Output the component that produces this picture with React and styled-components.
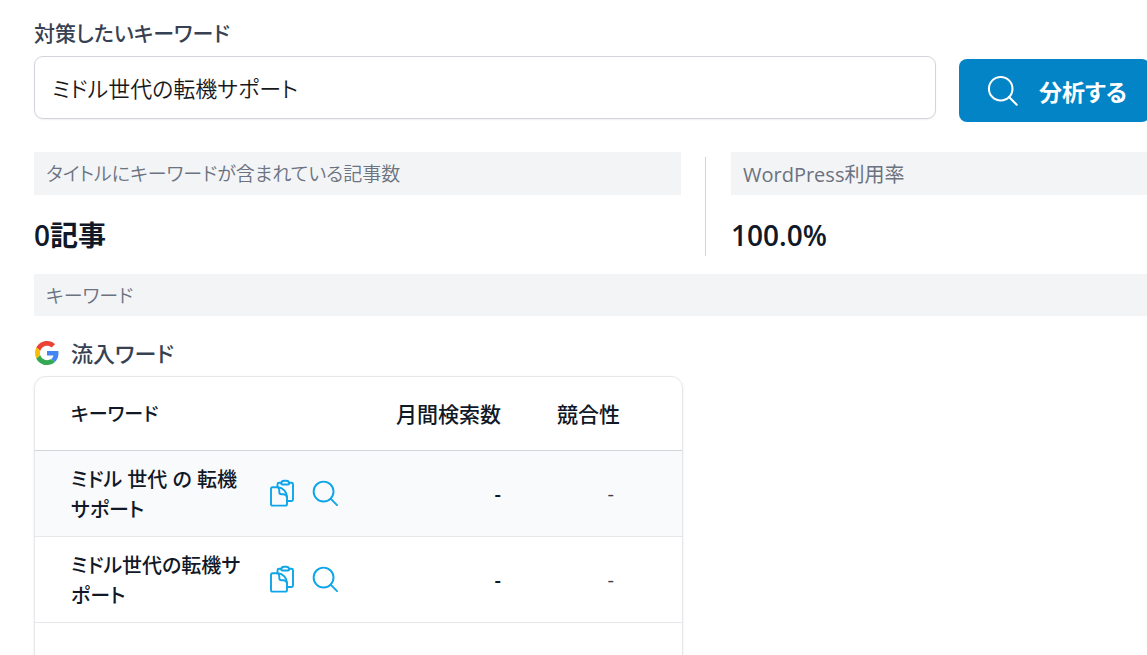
import React from "react";
import styled, { createGlobalStyle } from "styled-components";

const color = {
  ink: "#111827",
  label: "#374151",
  muted: "#6b7280",
  line: "#e5e7eb",
  border: "#d1d5db",
  bar: "#f3f4f6",
  primary: "#0284c7",
  icon: "#0ea5e9"
};

const fontSize = {
  kana: "19px",
  body: "20px",
  small: "21px",
  medium: "22px",
  large: "28px"
};

const GlobalStyle = createGlobalStyle`
  * {
    box-sizing: border-box;
  }

  body {
    margin: 0;
    background: white;
    color: ${color.ink};
    font-family: "Open Sans", "Noto Sans CJK JP", sans-serif;
    font-feature-settings: "palt";
  }

  button,
  input {
    font: inherit;
    font-feature-settings: inherit;
  }
`;

const Page = styled.main`
  min-height: 100vh;
  padding: 16px 0 0 34px;
  overflow-x: clip;
`;

const Label = styled.label`
  display: block;
  height: 40px;
  font-size: ${fontSize.small};
  font-weight: 500;
  line-height: 34px;
  color: ${color.label};
`;

const SearchForm = styled.form`
  display: flex;
  align-items: flex-end;
  gap: 23px;
  margin-right: -3px;
  height: 66px;
`;

const KeywordInput = styled.input`
  flex: 1;
  align-self: flex-start;
  min-width: 0;
  height: 63px;
  padding: 0 17px 2px;
  border: 1px solid ${color.border};
  border-radius: 9px;
  background: white;
  box-shadow: 0 1px 2px rgba(0, 0, 0, 0.06);
  font-size: ${fontSize.medium};
  font-weight: 350;
  color: #18181b;
`;

const AnalyzeButton = styled.button`
  display: flex;
  align-items: center;
  gap: 20px;
  width: 191px;
  height: 63px;
  padding: 0 0 0 28px;
  border: 0;
  border-radius: 8px;
  background: ${color.primary};
  font-size: 23px;
  font-weight: 700;
  color: white;
  white-space: nowrap;
`;

const Stats = styled.dl`
  display: grid;
  grid-template-columns: minmax(0, 647px) minmax(0, 1fr);
  gap: 24px;
  margin: 30px 0 18px;
`;

const Stat = styled.div`
  position: relative;

  & + &::before {
    content: "";
    position: absolute;
    top: 5px;
    bottom: 0;
    left: 0;
    width: 1px;
    background: ${color.border};
  }

  & + & {
    padding-left: 26px;
  }
`;

const StatName = styled.dt`
  padding: 2px 12px 0;
  background: ${color.bar};
  font-size: ${props => (props.$kana ? fontSize.kana : fontSize.body)};
  font-weight: ${props => (props.$kana ? "350" : "400")};
  line-height: 41px;
  color: ${color.muted};
`;

const StatValue = styled.dd`
  margin: 0;
  padding: 30px 0 10px;
  font-size: ${fontSize.large};
  font-weight: 600;
  line-height: 21px;
`;

const Section = styled.h2`
  margin: 0;
  padding: 2px 12px 0;
  background: ${color.bar};
  font-size: ${fontSize.kana};
  font-weight: 350;
  line-height: 40px;
  color: ${color.muted};
`;

const TableTitle = styled.h3`
  display: flex;
  align-items: center;
  gap: 12px;
  margin: 20px 0 6px;
  padding: 0 1px;
  font-size: ${fontSize.medium};
  font-weight: 500;
  line-height: 34px;
  color: ${color.label};
`;

const Card = styled.div`
  max-width: 649px;
  border: 1px solid ${color.line};
  border-radius: 12px;
  box-shadow: 0 1px 3px rgba(0, 0, 0, 0.08);
  overflow: hidden;
`;

const Table = styled.table`
  width: 100%;
  border-collapse: collapse;
  font-size: ${fontSize.body};
  line-height: 30px;
`;

const HeadCell = styled.th`
  height: 73px;
  padding: 2px 0 0 36px;
  border-bottom: 1px solid ${color.border};
  font-size: ${fontSize.kana};
  font-weight: 500;
  text-align: left;
  white-space: nowrap;
`;

const HeadNumber = styled(HeadCell)`
  padding: 2px ${props => (props.$last ? "62px" : "0")} 0 0;
  font-size: ${fontSize.small};
  text-align: right;
`;

const Row = styled.tr`
  background: ${props => (props.$shaded ? "#f9fafb" : "white")};
`;

const KeywordCell = styled.td`
  height: 86px;
  padding: 0 0 0 36px;
  border-bottom: 1px solid ${color.line};
`;

const NumberCell = styled.td`
  padding: 2px ${props => (props.$last ? "68px" : "0")} 0 0;
  border-bottom: 1px solid ${color.line};
  font-weight: ${props => (props.$last ? "500" : "600")};
  color: ${props => (props.$last ? color.label : color.ink)};
  text-align: right;
`;

const KeywordLine = styled.div`
  display: flex;
  align-items: center;
`;

const KeywordText = styled.span`
  width: 198px;
  padding: 4px 12px 0 0;
  font-weight: 500;
  white-space: pre-line;
`;

const IconButton = styled.button`
  display: flex;
  margin-right: 16px;
  padding: 0;
  border: 0;
  background: none;
  color: ${color.icon};
`;

const SearchIcon = ({ size, stroke }) => (
  <svg width={size} height={size} viewBox="0 0 28 28" fill="none" aria-hidden="true">
    <circle cx="12" cy="12" r="10.3" stroke="currentColor" strokeWidth={stroke} />
    <path
      d="M19.3 19.3 26 26"
      stroke="currentColor"
      strokeWidth={stroke}
      strokeLinecap="round"
    />
  </svg>
);

const CopyIcon = () => (
  <svg
    width="27"
    height="28"
    viewBox="0 0 27 28"
    fill="none"
    stroke="currentColor"
    strokeWidth="1.9"
    strokeLinejoin="round"
    strokeLinecap="round"
    aria-hidden="true"
  >
    <path d="M8.5 8V5.2Q8.5 3.7 10 3.7H12.2M20.2 3.7H22.5Q24 3.7 24 5.2V20.5Q24 22 22.5 22H18" />
    <path d="M12.2 4.4Q12.6 1.8 15 1.8H17.4Q19.8 1.8 20.2 4.4Q20.2 5.5 19 5.5H13.4Q12.2 5.5 12.2 4.4Z" />
    <path d="M3.5 8.3H8.7C14 8.6 18 13 18 18.2V25Q18 26.6 16.4 26.6H3.6Q2 26.6 2 25V9.9Q2 8.3 3.5 8.3Z" />
    <path d="M8.7 8.3Q10.3 9.4 10.3 11.6V13.2Q10.3 15.2 12.4 15.2H14.2Q17.4 15.2 18 18.2" />
  </svg>
);

const GoogleIcon = () => (
  <svg width="24" height="24" viewBox="0 0 48 48" aria-hidden="true">
    <path
      fill="#EA4335"
      d="M24 9.5c3.54 0 6.71 1.22 9.21 3.6l6.85-6.85C35.9 2.38 30.47 0 24 0 14.62 0 6.51 5.38 2.56 13.22l7.98 6.19C12.43 13.72 17.74 9.5 24 9.5z"
    />
    <path
      fill="#4285F4"
      d="M46.98 24.55c0-1.57-.15-3.09-.38-4.55H24v9.02h12.94c-.58 2.96-2.26 5.48-4.78 7.18l7.73 6c4.51-4.18 7.09-10.36 7.09-17.65z"
    />
    <path
      fill="#FBBC05"
      d="M10.53 28.59c-.48-1.45-.76-2.99-.76-4.59s.27-3.14.76-4.59l-7.98-6.19C.92 16.46 0 20.12 0 24c0 3.88.92 7.54 2.56 10.78l7.97-6.19z"
    />
    <path
      fill="#34A853"
      d="M24 48c6.48 0 11.93-2.13 15.89-5.81l-7.73-6c-2.15 1.45-4.92 2.3-8.16 2.3-6.26 0-11.57-4.22-13.47-9.91l-7.98 6.19C6.51 42.62 14.62 48 24 48z"
    />
  </svg>
);

const keywords = [
  { text: "ミドル 世代 の 転機\nサポート", volume: "-", competition: "-" },
  { text: "ミドル世代の転機サ\nポート", volume: "-", competition: "-" },
  { text: "", volume: "", competition: "" }
];

const KeywordTable = ({ rows }) => (
  <Card>
    <Table>
      <colgroup>
        <col />
        <col style={{ width: 120 }} />
        <col style={{ width: 181 }} />
      </colgroup>
      <thead>
        <tr>
          <HeadCell scope="col">キーワード</HeadCell>
          <HeadNumber scope="col">月間検索数</HeadNumber>
          <HeadNumber scope="col" $last>
            競合性
          </HeadNumber>
        </tr>
      </thead>
      <tbody>
        {rows.map((row, i) => (
          <Row key={i} $shaded={i === 0}>
            <KeywordCell>
              {row.text && (
                <KeywordLine>
                  <KeywordText>{row.text}</KeywordText>
                  <IconButton type="button" aria-label="コピー">
                    <CopyIcon />
                  </IconButton>
                  <IconButton type="button" aria-label="検索">
                    <SearchIcon size={27} stroke={2} />
                  </IconButton>
                </KeywordLine>
              )}
            </KeywordCell>
            <NumberCell>{row.volume}</NumberCell>
            <NumberCell $last>{row.competition}</NumberCell>
          </Row>
        ))}
      </tbody>
    </Table>
  </Card>
);

const App = () => (
  <>
    <GlobalStyle />
    <Page>
      <Label htmlFor="keyword">対策したいキーワード</Label>
      <SearchForm onSubmit={e => e.preventDefault()}>
        <KeywordInput id="keyword" type="text" defaultValue="ミドル世代の転機サポート" />
        <AnalyzeButton type="submit">
          <SearchIcon size={32} stroke={1.8} />
          分析する
        </AnalyzeButton>
      </SearchForm>
      <Stats>
        <Stat>
          <StatName $kana>タイトルにキーワードが含まれている記事数</StatName>
          <StatValue>0記事</StatValue>
        </Stat>
        <Stat>
          <StatName>WordPress利用率</StatName>
          <StatValue>100.0%</StatValue>
        </Stat>
      </Stats>
      <Section>キーワード</Section>
      <TableTitle>
        <GoogleIcon />
        流入ワード
      </TableTitle>
      <KeywordTable rows={keywords} />
    </Page>
  </>
);

export default App;
